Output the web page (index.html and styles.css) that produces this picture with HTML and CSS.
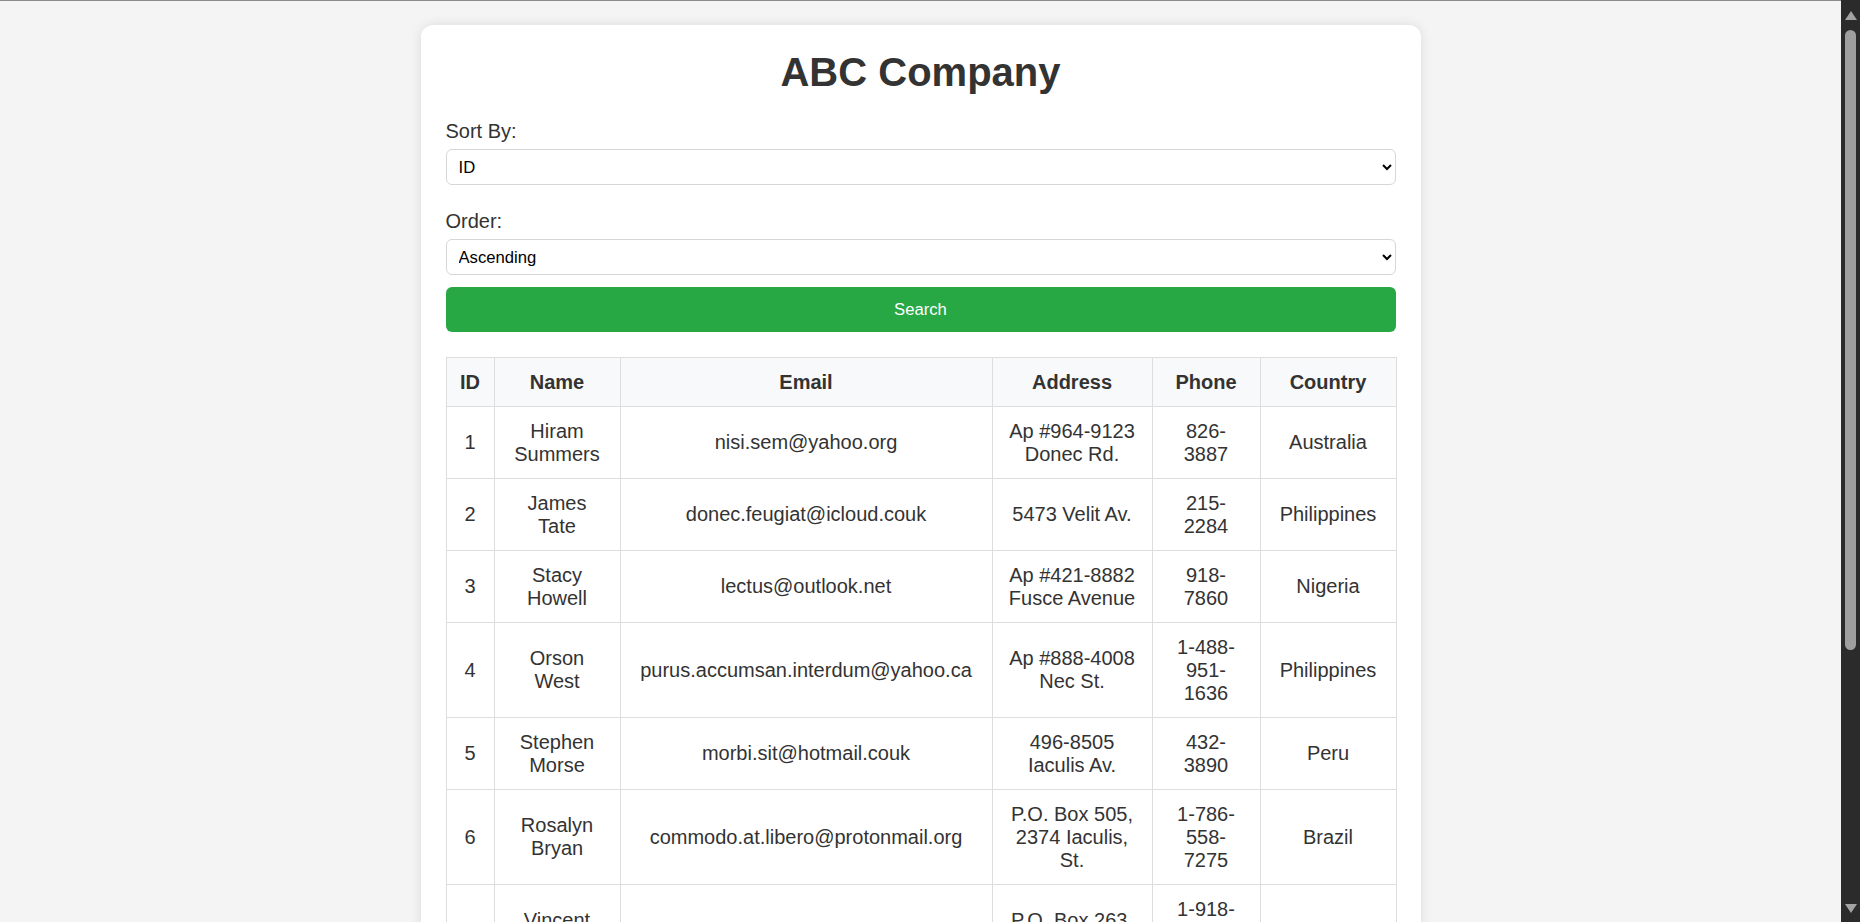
FILE: index.html
```html
<!DOCTYPE html>
<html lang="en">
<head>
<meta charset="utf-8">
<title>ABC Company</title>
<link rel="stylesheet" href="styles.css">
</head>
<body>
<div class="container">
  <h1 class="title">ABC Company</h1>
  <div class="field">
    <label class="label" for="sort">Sort By:</label>
    <select class="select" id="sort">
      <option>ID</option>
      <option>Name</option>
      <option>Email</option>
      <option>Country</option>
    </select>
  </div>
  <div class="field">
    <label class="label" for="order">Order:</label>
    <select class="select" id="order">
      <option>Ascending</option>
      <option>Descending</option>
    </select>
  </div>
  <button class="btn" type="button">Search</button>
  <table class="grid">
    <colgroup>
      <col class="c-id"><col class="c-name"><col class="c-email"><col class="c-addr"><col class="c-phone"><col class="c-country">
    </colgroup>
    <thead>
      <tr><th>ID</th><th>Name</th><th>Email</th><th>Address</th><th>Phone</th><th>Country</th></tr>
    </thead>
    <tbody>
      <tr><td>1</td><td>Hiram Summers</td><td>nisi.sem@yahoo.org</td><td>Ap #964-9123 Donec Rd.</td><td>826-3887</td><td>Australia</td></tr>
      <tr><td>2</td><td>James Tate</td><td>donec.feugiat@icloud.couk</td><td>5473 Velit Av.</td><td>215-2284</td><td>Philippines</td></tr>
      <tr><td>3</td><td>Stacy Howell</td><td>lectus@outlook.net</td><td>Ap #421-8882 Fusce Avenue</td><td>918-7860</td><td>Nigeria</td></tr>
      <tr><td>4</td><td>Orson West</td><td>purus.accumsan.interdum@yahoo.ca</td><td>Ap #888-4008 Nec St.</td><td>1-488-951-1636</td><td>Philippines</td></tr>
      <tr><td>5</td><td>Stephen Morse</td><td>morbi.sit@hotmail.couk</td><td>496-8505 Iaculis Av.</td><td>432-3890</td><td>Peru</td></tr>
      <tr><td>6</td><td>Rosalyn Bryan</td><td>commodo.at.libero@protonmail.org</td><td>P.O. Box 505, 2374 Iaculis, St.</td><td>1-786-558-7275</td><td>Brazil</td></tr>
      <tr><td>7</td><td>Vincent Riddle</td><td>eget.lacus@google.edu</td><td>P.O. Box 263, 4521 Nulla Rd.</td><td>1-918-352-4472</td><td>Canada</td></tr>
      <tr><td>8</td><td>Keely Baxter</td><td>ac.mattis@aol.net</td><td>8762 Lorem Avenue</td><td>1-654-218-3384</td><td>Vietnam</td></tr>
      <tr><td>9</td><td>Ray Dean</td><td>mauris.ut@protonmail.com</td><td>Ap #512-3451 Eu Road</td><td>345-1121</td><td>Germany</td></tr>
      <tr><td>10</td><td>Wyatt Hull</td><td>lectus.sit@icloud.ca</td><td>933-7104 Aliquam Av.</td><td>1-235-673-2381</td><td>Mexico</td></tr>
    </tbody>
  </table>
</div>
<div class="scrollbar" aria-hidden="true">
  <div class="sb-arrow sb-up"></div>
  <div class="sb-thumb"></div>
  <div class="sb-arrow sb-down"></div>
</div>
</body>
</html>
```
FILE: styles.css
```css
html {
  background: #f4f4f4;
  overflow: hidden;
}
body {
  margin: 0;
  padding: 25px 19px 25px 0;
  background: #f4f4f4;
  font-family: "Liberation Sans", Arial, sans-serif;
  font-size: 20px;
  color: #333;
  border-top: 1px solid #8a8a8a;
}
.container {
  width: 1000px;
  box-sizing: border-box;
  margin: -1px auto 0;
  padding: 25px;
  background: #fff;
  border-radius: 12px;
  box-shadow: 0 0 12px rgba(0, 0, 0, 0.1);
}
.title {
  margin: 0 0 25px;
  font-size: 40px;
  font-weight: bold;
  text-align: center;
  color: #333;
}
.field {
  margin-bottom: 25px;
}
.field + .field {
  margin-bottom: 12px;
}
.label {
  display: block;
  margin-bottom: 6px;
  font-size: 20px;
}
.select {
  display: block;
  width: 100%;
  height: 36px;
  box-sizing: border-box;
  padding: 0 8px;
  font-family: "Liberation Sans", Arial, sans-serif;
  font-size: 16.67px;
  color: #000;
  background: #fff;
  border: 1px solid #d6d6d6;
  border-radius: 6px;
}
.btn {
  display: block;
  width: 100%;
  height: 45px;
  margin-bottom: 25px;
  border: none;
  border-radius: 6px;
  background: #28a745;
  color: #fff;
  font-family: "Liberation Sans", Arial, sans-serif;
  font-size: 16.67px;
}
.grid {
  width: 100%;
  table-layout: fixed;
  border-collapse: collapse;
}
.c-id { width: 48px; }
.c-name { width: 126px; }
.c-email { width: 372px; }
.c-addr { width: 160px; }
.c-phone { width: 108px; }
.c-country { width: 136px; }
.grid th,
.grid td {
  border: 1px solid #ddd;
  padding: 12.5px;
  text-align: center;
  line-height: 23px;
  color: #333;
}
.grid th {
  background: #f8f9fa;
  font-weight: bold;
}

/* window scrollbar, drawn over the right edge */
.scrollbar {
  position: fixed;
  top: 0;
  right: 0;
  bottom: 0;
  width: 19px;
  background: #2b2b2b;
  display: flex;
  flex-direction: column;
  align-items: center;
}
.sb-arrow {
  width: 0;
  height: 0;
  border-left: 6px solid transparent;
  border-right: 6px solid transparent;
}
.sb-up {
  margin-top: 11px;
  border-bottom: 9px solid #a3a3a3;
}
.sb-thumb {
  width: 11px;
  height: 620px;
  margin-top: 10px;
  border-radius: 6px;
  background: #9f9f9f;
}
.sb-down {
  margin-top: auto;
  margin-bottom: 9px;
  border-top: 9px solid #a3a3a3;
}
```
